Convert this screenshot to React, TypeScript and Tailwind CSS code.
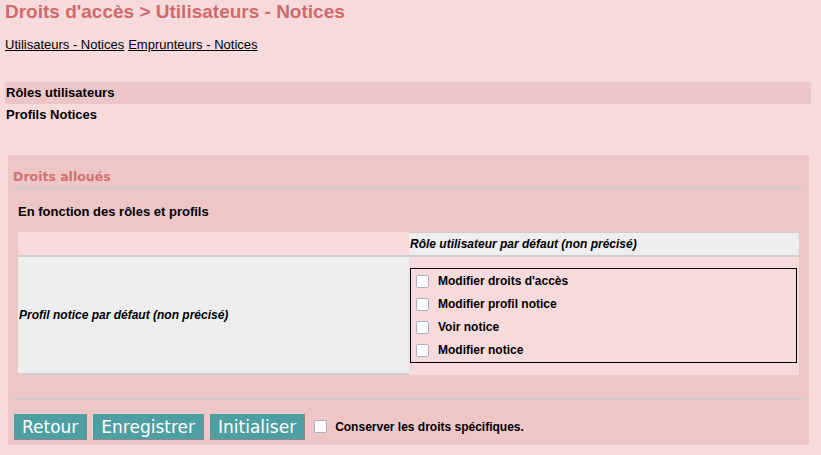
import { useState } from 'react';

const rights = ["Modifier droits d'accès", 'Modifier profil notice', 'Voir notice', 'Modifier notice'];

function Box({ checked, onChange }: { checked: boolean; onChange: () => void }) {
    return (
        <span
            onClick={onChange}
            className={`inline-block w-[13px] h-[13px] rounded-[2px] border border-[#a3b3c3] ${checked ? 'bg-[#4e9fa2]' : 'bg-white'}`}
        />
    );
}

export default function App() {
    const [checked, setChecked] = useState<boolean[]>([false, false, false, false]);
    const [keep, setKeep] = useState(false);

    return (
        <div className="w-[821px] h-[455px] bg-[#f7dadb] text-black font-['Liberation_Sans',Arial,sans-serif] overflow-hidden">
            {/* Title */}
            <h1 className="px-[5px] pt-[1px] text-[19px] leading-[22px] font-bold text-[#d06a6a]">
                Droits d'accès &gt; Utilisateurs - Notices
            </h1>

            {/* Sub navigation */}
            <div className="px-[5px] mt-[14px] text-[13px] leading-[16px] flex gap-[4px]">
                <a className="underline">Utilisateurs - Notices</a>
                <a className="underline">Emprunteurs - Notices</a>
            </div>

            {/* Menus */}
            <div className="mt-[29px] mx-[5px] mr-[10px] h-[22px] bg-[#ecc6c6] px-[1px] flex items-center text-[13px] font-bold">
                Rôles utilisateurs
            </div>
            <div className="mx-[5px] px-[1px] h-[21px] flex items-center text-[13px] font-bold">Profils Notices</div>

            {/* Panel */}
            <div className="mt-[30px] ml-[8px] w-[801px] h-[290px] bg-[#efc6c6] px-[5px] flex flex-col">
                <div className="pt-[10px] h-[34px] border-b-2 border-[#d2cbcb] font-['DejaVu_Sans',sans-serif] text-[12.5px] leading-[19px] font-bold text-[#d07070] flex items-center">
                    Droits alloués
                </div>
                <div className="mt-[15px] px-[5px] text-[13px] font-bold leading-[16px]">En fonction des rôles et profils</div>

                <div className="mt-[12px] ml-[5px] w-[781px] grid grid-cols-[391px_390px]">
                    <div className="h-[25px] bg-[#f7dadb] border-b-2 border-[#d0cccc]" />
                    <div className="h-[25px] bg-[#eeeeee] border-t border-b-2 border-[#d0cccc] flex items-center pl-[1px] text-[12px] font-bold italic">
                        Rôle utilisateur par défaut (non précisé)
                    </div>
                    <div className="h-[118px] bg-[#eeeeee] border-b-2 border-[#d0cccc] flex items-center pl-[1px] text-[12px] font-bold italic">
                        Profil notice par défaut (non précisé)
                    </div>
                    <div className="h-[118px] bg-[#f7dadb] pl-[1px] pr-[2px] pt-[11px]">
                        <div className="h-[95px] border border-black flex flex-col justify-center gap-[7px] pl-[5px]">
                            {rights.map((r, i) => (
                                <label key={r} className="flex items-center gap-[9px] text-[12px] font-bold leading-[16px]">
                                    <Box
                                        checked={checked[i]}
                                        onChange={() => setChecked(checked.map((c, j) => (j === i ? !c : c)))}
                                    />
                                    {r}
                                </label>
                            ))}
                        </div>
                    </div>
                </div>

                <div className="mt-[23px] h-[2px] bg-[#d2cbcb]" />

                <div className="mt-[13px] flex items-center gap-[5px]">
                    {['Retour', 'Enregistrer', 'Initialiser'].map((b) => (
                        <button
                            key={b}
                            className="h-[27px] px-[8px] bg-[#4e9fa2] text-white font-['DejaVu_Sans',sans-serif] text-[17px] leading-[20px] border border-t-[#e5d0d0] border-l-[#e5d0d0] border-r-[#8a8a8a] border-b-[#8a8a8a]"
                        >
                            {b}
                        </button>
                    ))}
                    <span className="ml-[4px] flex items-center gap-[8px] text-[12px] font-bold">
                        <Box checked={keep} onChange={() => setKeep(!keep)} />
                        Conserver les droits spécifiques.
                    </span>
                </div>
            </div>
        </div>
    );
}
